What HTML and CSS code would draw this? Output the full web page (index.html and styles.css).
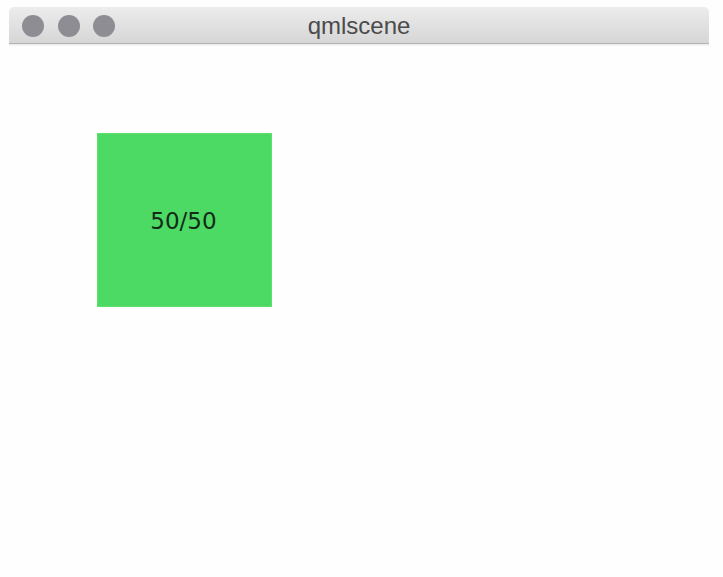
FILE: index.html
```html
<!DOCTYPE html>
<html>
<head>
<meta charset="utf-8">
<link rel="stylesheet" href="styles.css">
</head>
<body>
<div class="page">
  <div class="window">
    <div class="titlebar">
      <div class="lights">
        <span class="light"></span>
        <span class="light"></span>
        <span class="light"></span>
      </div>
      <div class="title">qmlscene</div>
      <div class="spacer"></div>
    </div>
    <div class="content">
      <div class="square"><span class="label">50/50</span></div>
    </div>
  </div>
</div>
</body>
</html>
```
FILE: styles.css
```css
html, body {
  margin: 0;
  padding: 0;
  background: #fefefe;
}
.page {
  width: 723px;
  height: 577px;
  padding: 7px 14px 0 9px;
  box-sizing: border-box;
}
.window {
  width: 700px;
  display: flex;
  flex-direction: column;
}
.titlebar {
  height: 36px;
  display: grid;
  grid-template-columns: 1fr auto 1fr;
  align-items: center;
  background: linear-gradient(#ececec, #d6d6d6);
  border-bottom: 1px solid #b4b4b4;
  border-radius: 5px 5px 0 0;
  box-shadow: 0 1px 0 #ececec, 0 2px 0 #f5f5f5;
}
.lights {
  display: flex;
  gap: 13.5px;
  padding-left: 13px;
}
.light {
  width: 22px;
  height: 22px;
  border-radius: 50%;
  background: #8f8d94;
}
.title {
  font-family: "Liberation Sans", Arial, sans-serif;
  font-size: 24px;
  color: #4b4b4b;
  line-height: 36px;
  padding-top: 1px;
}
.content {
  padding: 89px 0 0 88px;
}
.square {
  width: 175px;
  height: 174px;
  background: #4cda64;
  box-shadow: inset 0 0 0 1px #5ce070;
  display: flex;
  align-items: center;
  justify-content: center;
}
.label {
  font-family: "DejaVu Sans", Verdana, sans-serif;
  font-size: 23px;
  color: #132a18;
  margin-left: -2px;
  margin-top: 1px;
}
```
